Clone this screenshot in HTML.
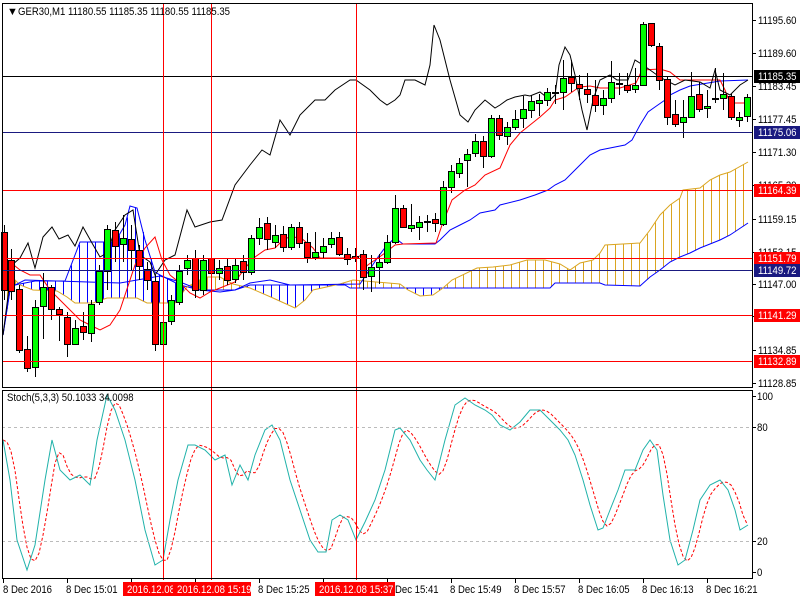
<!DOCTYPE html>
<html><head><meta charset="utf-8"><style>
html,body{margin:0;padding:0;background:#fff;width:800px;height:600px;overflow:hidden}
svg{display:block}
text{font-family:"Liberation Sans",sans-serif;font-size:11px}
</style></head><body>
<svg id="s" width="800" height="600" xmlns="http://www.w3.org/2000/svg">
<rect width="800" height="600" fill="#fff"/>
<g id="hatch"></g>
<g id="lines"></g>
<g id="candles"></g>
<g id="stoch"></g>
<line x1="2" y1="76.5" x2="752" y2="76.5" stroke="#000"/>
<line x1="2" y1="132.5" x2="752" y2="132.5" stroke="#1a1a80"/>
<line x1="2" y1="190.5" x2="752" y2="190.5" stroke="#f00"/>
<line x1="2" y1="258.5" x2="752" y2="258.5" stroke="#f00"/>
<line x1="2" y1="270.5" x2="752" y2="270.5" stroke="#1a1a80"/>
<line x1="2" y1="315.5" x2="752" y2="315.5" stroke="#f00"/>
<line x1="2" y1="361.5" x2="752" y2="361.5" stroke="#f00"/>
<line x1="2" y1="541.5" x2="752" y2="541.5" stroke="#bbb" stroke-dasharray="3,3"/>
<line x1="2" y1="427.5" x2="752" y2="427.5" stroke="#bbb" stroke-dasharray="3,3"/>
<line x1="163.5" y1="4" x2="163.5" y2="580" stroke="#f00"/>
<line x1="211.5" y1="4" x2="211.5" y2="580" stroke="#f00"/>
<line x1="356.5" y1="4" x2="356.5" y2="580" stroke="#f00"/>
<rect x="2.5" y="3.5" width="750" height="384" fill="none" stroke="#000"/>
<rect x="2.5" y="390.5" width="750" height="188" fill="none" stroke="#000"/>
<text x="7" y="15" font-size="8">▼</text>
<text class="sq" x="18" y="15">GER30,M1  11180.55 11185.35 11180.55 11185.35</text>
<text class="sq" x="7" y="401" font-size="10">Stoch(5,3,3) 50.1033 34.0098</text>
<g id="axis"></g>
</svg>
<script>
var NS="http://www.w3.org/2000/svg";
function el(p,t,a,txt){var e=document.createElementNS(NS,t);for(var k in a)e.setAttribute(k,a[k]);if(txt!=null)e.textContent=txt;p.appendChild(e);if(t=="text")e.setAttribute("class","sq");return e;}
function pl(p,pts,col,dash){el(document.getElementById(p),"polyline",{points:pts.map(function(q){return q.join(",")}).join(" "),fill:"none",stroke:col,"stroke-width":1,"stroke-dasharray":dash||""});}
function interp(pts,x){if(x<=pts[0][0])return pts[0][1];for(var i=1;i<pts.length;i++){if(x<=pts[i][0]){var a=pts[i-1],b=pts[i];return a[1]+(b[1]-a[1])*(x-a[0])/((b[0]-a[0])||1);}}return pts[pts.length-1][1];}
var black=[[3,335],[12,265],[20,258],[28,243],[35,268],[43,237],[52,227],[59,239],[68,235],[75,246],[83,227],[92,243],[100,257],[107,253],[115,230],[125,215],[133,210],[140,255],[150,262],[155,275],[165,260],[175,255],[187,210],[195,227],[210,222],[222,220],[235,185],[250,165],[262,150],[270,155],[280,120],[290,135],[300,115],[315,100],[325,100],[335,90],[350,80],[356,80],[370,90],[380,100],[387,105],[395,100],[400,95],[405,80],[415,80],[425,85],[430,65],[434,25],[440,40],[450,80],[460,115],[468,122],[475,110],[485,100],[495,108],[500,105],[507,100],[515,97],[525,95],[530,96],[540,92],[550,100],[555,95],[559,65],[565,47],[570,55],[575,75],[582,110],[587,130],[593,100],[600,80],[610,75],[617,80],[628,80],[635,60],[643,65],[650,70],[657,75],[665,80],[675,85],[685,80],[700,82],[710,88],[715,70],[720,90],[730,95],[740,85],[748,80]];
var red=[[3,265],[10,262],[20,270],[30,275],[40,275],[50,290],[60,300],[70,310],[80,320],[90,325],[100,330],[110,325],[120,310],[135,265],[145,248],[155,237],[162,260],[170,275],[180,283],[190,293],[200,298],[210,292],[220,288],[235,282],[245,268],[255,257],[265,250],[275,248],[285,238],[300,237],[313,248],[320,258],[345,258],[355,258],[362,255],[365,267],[372,262],[378,258],[385,253],[395,245],[403,244],[436,243],[442,225],[452,200],[465,190],[475,185],[485,175],[500,168],[510,145],[520,133],[530,125],[540,117],[550,108],[555,100],[565,97],[575,90],[580,87],[590,86],[600,88],[620,88],[636,83],[642,70],[660,69],[670,72],[680,80],[720,80],[725,90],[730,103],[748,103]];
var kij=[[3,335],[10,290],[15,285],[25,280],[120,283],[160,276],[180,282],[200,290],[220,292],[235,290],[250,283],[270,280],[290,285],[360,284],[368,272],[378,257],[387,245],[395,238],[403,244],[435,244],[440,240],[450,230],[460,225],[470,220],[480,213],[495,210],[500,205],[520,200],[535,195],[548,190],[555,185],[565,180],[575,170],[590,155],[600,150],[625,145],[632,140],[640,125],[648,112],[655,107],[665,100],[670,95],[680,90],[690,86],[720,81],[748,80]];
var sa=[[3,262],[7,272],[20,285],[33,290],[57,291],[67,297],[75,303],[93,303],[107,298],[137,298],[147,303],[175,303],[180,296],[187,287],[205,277],[220,277],[233,284],[250,288],[273,298],[295,308],[305,300],[313,290],[340,284],[353,280],[400,284],[408,290],[420,296],[433,295],[443,288],[452,280],[477,268],[493,267],[510,265],[527,260],[545,260],[560,264],[570,270],[580,263],[593,260],[600,253],[605,245],[640,243],[650,230],[660,215],[670,205],[680,198],[683,190],[700,188],[710,180],[720,175],[730,172],[748,162]];
var sb=[[3,335],[10,290],[15,285],[35,281],[65,281],[80,242],[115,242],[125,225],[130,206],[137,208],[145,240],[155,272],[160,275],[180,285],[200,290],[235,290],[250,285],[345,285],[350,288],[550,288],[555,283],[600,283],[605,285],[640,286],[650,277],[660,270],[670,262],[680,257],[690,253],[700,248],[720,240],[730,235],[748,223]];
var h=document.getElementById("hatch");
for(var x=7;x<=748;x+=8){var a=interp(sa,x),b=interp(sb,x);el(h,"line",{x1:x+.5,x2:x+.5,y1:a,y2:b,stroke:a<b?"#daa520":"#0000ff"});}
pl("lines",sb,"#0000ff");pl("lines",sa,"#daa520");pl("lines",kij,"#0000ff");pl("lines",red,"#f00");pl("lines",black,"#000");
var C=[[4,232,290,'r',225,300],[11,260,291,'r',249,300],[19,289,350,'r',285,353],[27,349,368,'r',336,372],[35,307,367,'g',300,377],[43,287,306,'g',273,339],[51,287,309,'r',285,320],[59,309,314,'r',307,341],[67,317,344,'r',312,357],[75,328,344,'g',320,345],[83,326,332,'r',312,340],[91,304,333,'g',300,342],[99,271,302,'g',265,305],[107,229,271,'g',225,290],[115,230,246,'r',222,262],[123,238,244,'g',215,262],[131,239,250,'r',225,270],[139,250,266,'r',245,280],[147,269,280,'r',262,290],[155,281,344,'r',275,351],[163,322,344,'g',318,350],[171,300,321,'g',295,325],[179,271,302,'g',265,305],[187,260,268,'g',255,275],[195,258,290,'r',250,298],[203,260,290,'g',255,295],[211,258,273,'r',250,280],[219,268,273,'g',260,280],[227,266,280,'r',258,285],[235,265,279,'g',258,283],[243,261,272,'r',255,280],[251,238,272,'g',235,275],[259,227,238,'g',218,245],[267,223,239,'r',217,250],[275,235,242,'g',225,248],[283,234,247,'r',226,252],[291,227,247,'g',224,250],[299,227,243,'r',222,248],[307,242,257,'r',233,263],[315,252,257,'g',232,260],[323,246,252,'g',238,258],[331,238,244,'g',232,248],[339,237,254,'r',232,256],[347,254,259,'r',248,265],[355,256,258,'r',248,262],[363,254,277,'r',250,290],[371,267,276,'g',255,292],[379,262,267,'g',254,284],[387,242,262,'g',235,264],[395,208,242,'g',195,244],[403,208,227,'r',205,228],[411,225,228,'g',204,232],[419,222,227,'g',216,240],[427,221,222,'g',215,232],[435,219,223,'r',213,232],[443,187,224,'g',181,226],[451,171,187,'g',165,193],[459,163,173,'g',158,178],[467,154,160,'g',149,187],[475,141,153,'g',134,157],[483,141,156,'r',136,168],[491,118,156,'g',115,158],[499,118,135,'r',115,140],[507,127,136,'g',122,145],[515,119,127,'g',110,130],[523,109,118,'g',96,128],[531,101,110,'g',95,118],[539,100,103,'g',94,116],[547,92,100,'g',88,106],[555,92,93,'g',85,104],[563,78,92,'g',60,110],[571,77,83,'r',60,92],[579,84,88,'r',75,100],[587,89,94,'r',73,103],[595,95,105,'r',80,112],[603,98,105,'g',90,115],[611,82,98,'g',61,103],[619,83,84,'g',73,95],[627,85,90,'r',73,93],[635,85,89,'g',68,93],[643,24,85,'g',22,86],[651,23,45,'r',23,47],[659,46,80,'r',43,90],[667,79,117,'r',77,125],[675,114,124,'r',100,127],[683,117,122,'g',100,138],[691,96,117,'g',72,118],[699,94,109,'r',82,112],[707,106,108,'g',90,118],[715,98,99,'g',68,103],[723,94,98,'g',73,110],[731,96,117,'r',94,120],[739,117,120,'g',112,127],[747,97,116,'g',94,122]];
var cg=document.getElementById("candles");
C.forEach(function(c){var x=c[0]+.5;el(cg,"line",{x1:x,x2:x,y1:c[4],y2:c[5],stroke:"#000"});var hh=Math.max(1,c[2]-c[1]);el(cg,"rect",{x:c[0]-3+.5,y:c[1]+.5,width:6,height:hh,fill:c[3]=='g'?"#00ff00":"#ff0000",stroke:"#000"});});
var K=[[3,440],[10,480],[17,540],[27,570],[35,545],[45,480],[52,440],[60,470],[70,480],[80,475],[90,485],[97,440],[107,395],[115,410],[125,440],[135,480],[145,530],[155,565],[163,560],[170,520],[178,480],[188,445],[195,445],[205,450],[215,460],[225,455],[232,485],[240,465],[248,480],[255,455],[265,430],[272,425],[280,440],[290,480],[300,510],[310,540],[318,552],[326,552],[332,520],[340,515],[348,520],[356,540],[365,522],[375,500],[385,470],[395,430],[400,428],[410,440],[420,460],[427,470],[435,480],[445,440],[455,405],[465,398],[475,405],[485,410],[492,415],[500,425],[510,430],[520,422],[530,410],[540,410],[550,420],[560,430],[568,440],[575,455],[583,480],[590,505],[598,530],[603,528],[610,510],[618,490],[625,470],[635,470],[643,450],[650,440],[657,450],[663,495],[670,540],[678,565],[685,560],[693,530],[700,500],[710,485],[720,480],[728,490],[735,510],[740,530],[748,525]];
var D=[];for(var x=3;x<=748;x+=4){D.push([x,(interp(K,x-3)+interp(K,x-7)+interp(K,x-11))/3]);}
pl("stoch",D,"#f00","3,2");pl("stoch",K,"#20b2aa");
var ax=document.getElementById("axis");
[["11195.60",20],["11189.60",53],["11183.45",86],["11177.45",119],["11171.30",152],["11165.30",185],["11159.15",219],["11153.15",252],["11147.00",284],["11141.00",316],["11134.85",350],["11128.85",383]].forEach(function(l){el(ax,"line",{x1:752,x2:756,y1:l[1]+.5,y2:l[1]+.5,stroke:"#000"});el(ax,"text",{x:758,y:l[1]+4},l[0]);});
[["11185.35",76,"#000"],["11175.06",132,"#1a1a80"],["11164.39",190,"#f00"],["11151.79",258,"#f00"],["11149.72",270,"#1a1a80"],["11141.29",315,"#f00"],["11132.89",361,"#f00"]].forEach(function(l){el(ax,"rect",{x:754,y:l[1]-6,width:46,height:13,fill:l[2]});el(ax,"text",{x:758,y:l[1]+4,fill:"#fff"},l[0]);});
[["100",396],["80",427],["20",541],["0",572]].forEach(function(l){el(ax,"line",{x1:752,x2:756,y1:l[1]+.5,y2:l[1]+.5,stroke:"#000"});el(ax,"text",{x:757,y:l[1]+4},l[0]);});
for(var x=3;x<752;x+=64)el(ax,"line",{x1:x+.5,x2:x+.5,y1:579,y2:583,stroke:"#000"});
[["8 Dec 2016",3],["8 Dec 15:01",66],["8 Dec 15:25",258],["8 Dec 15:41",387],["8 Dec 15:49",450],["8 Dec 15:57",514],["8 Dec 16:05",578],["8 Dec 16:13",642],["8 Dec 16:21",706]].forEach(function(l){el(ax,"text",{x:l[1],y:593},l[0]);});
[["2016.12.08",123,50],["2016.12.08 15:19",173,78],["2016.12.08 15:37",315,80]].forEach(function(l){el(ax,"rect",{x:l[1],y:582,width:l[2],height:14,fill:"#f00"});el(ax,"text",{x:l[1]+4,y:593,fill:"#fff"},l[0]);});
var ts=document.querySelectorAll("text.sq");
for(var i=0;i<ts.length;i++){var t=ts[i];try{var L=t.getComputedTextLength();if(L>0){t.setAttribute("textLength",(L*0.87).toFixed(1));t.setAttribute("lengthAdjust","spacingAndGlyphs");}}catch(e){}}
</script>
</body></html>
